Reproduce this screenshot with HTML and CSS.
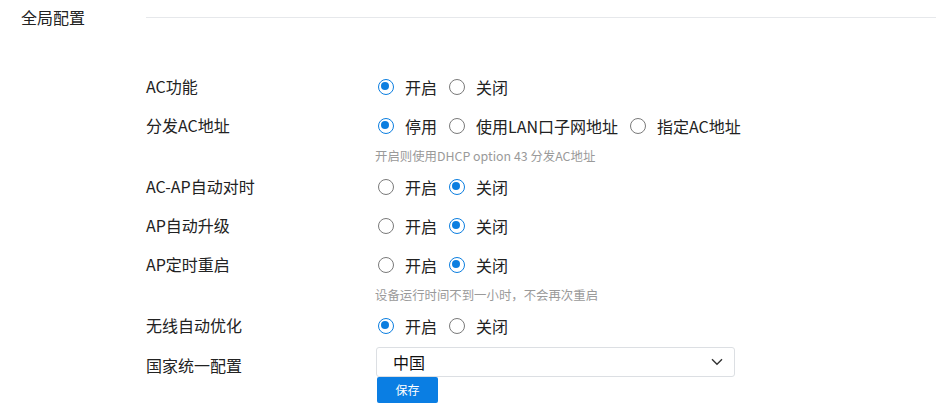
FILE: index.html
```html
<!DOCTYPE html>
<html lang="zh-CN">
<head>
<meta charset="utf-8">
<title>全局配置</title>
<link rel="stylesheet" href="styles.css">
</head>
<body>
<div class="page">
  <div class="section-head">
    <div class="section-title">全局配置</div>
    <div class="section-line"></div>
  </div>
  <div class="form">
    <div class="item">
      <div class="label">AC功能</div>
      <div class="control">
        <div class="radios">
          <span class="radio on"><i></i>开启</span>
          <span class="radio"><i></i>关闭</span>
        </div>
      </div>
    </div>
    <div class="item">
      <div class="label">分发AC地址</div>
      <div class="control">
        <div class="radios">
          <span class="radio on"><i></i>停用</span>
          <span class="radio"><i></i>使用LAN口子网地址</span>
          <span class="radio"><i></i>指定AC地址</span>
        </div>
        <div class="hint">开启则使用DHCP option 43 分发AC地址</div>
      </div>
    </div>
    <div class="item">
      <div class="label">AC-AP自动对时</div>
      <div class="control">
        <div class="radios">
          <span class="radio"><i></i>开启</span>
          <span class="radio on"><i></i>关闭</span>
        </div>
      </div>
    </div>
    <div class="item">
      <div class="label">AP自动升级</div>
      <div class="control">
        <div class="radios">
          <span class="radio"><i></i>开启</span>
          <span class="radio on"><i></i>关闭</span>
        </div>
      </div>
    </div>
    <div class="item">
      <div class="label">AP定时重启</div>
      <div class="control">
        <div class="radios">
          <span class="radio"><i></i>开启</span>
          <span class="radio on"><i></i>关闭</span>
        </div>
        <div class="hint">设备运行时间不到一小时，不会再次重启</div>
      </div>
    </div>
    <div class="item">
      <div class="label">无线自动优化</div>
      <div class="control">
        <div class="radios">
          <span class="radio on"><i></i>开启</span>
          <span class="radio"><i></i>关闭</span>
        </div>
      </div>
    </div>
    <div class="item item-select">
      <div class="label label-select">国家统一配置</div>
      <div class="control">
        <div class="select">
          <span class="select-value">中国</span>
          <svg class="chevron" width="12" height="8" viewBox="0 0 12 8"><path d="M1 1.2 L6 6.2 L11 1.2" fill="none" stroke="#333" stroke-width="1.4"/></svg>
        </div>
        <button class="btn-save">保存</button>
      </div>
    </div>
  </div>
</div>
</body>
</html>
```

FILE: styles.css
```css
html, body {
  margin: 0;
  padding: 0;
  background: #fff;
}
body {
  font-family: "Noto Sans CJK SC", "Noto Sans", sans-serif;
  color: #222;
  font-size: 16px;
}
.page {
  width: 936px;
  height: 420px;
  overflow: hidden;
}
.section-head {
  display: flex;
  align-items: center;
  height: 34px;
  padding-left: 21px;
}
.section-title {
  width: 125px;
  font-size: 16px;
  line-height: 20px;
  color: #222;
}
.section-line {
  flex: 1;
  height: 1px;
  background: #e6e8eb;
}
.form {
  padding-top: 33px;
}
.item {
  display: grid;
  grid-template-columns: 229px 1fr;
  padding-left: 146px;
}
.label {
  height: 39px;
  line-height: 39px;
  font-size: 16px;
  color: #222;
}
.control {
  display: flex;
  flex-direction: column;
}
.radios {
  display: flex;
  align-items: center;
  height: 39px;
}
.radio {
  display: inline-flex;
  align-items: center;
  font-size: 16px;
  color: #222;
  margin-right: 12px;
  margin-left: 3px;
}
.radio + .radio {
  margin-left: 0;
}
.wide {
  letter-spacing: 0.3px;
}
.radio i {
  box-sizing: border-box;
  width: 16px;
  height: 16px;
  border-radius: 50%;
  border: 1.6px solid #7a7a7a;
  margin-right: 11px;
  position: relative;
  display: inline-block;
}
.radio.on i {
  border: 1.6px solid #0b7ee0;
}
.radio.on i::after {
  content: "";
  position: absolute;
  left: 2.4px;
  top: 2.4px;
  width: 8px;
  height: 8px;
  border-radius: 50%;
  background: #0b7ee0;
}
.hint {
  height: 22px;
  line-height: 22px;
  font-size: 12.4px;
  color: #9a9a9a;
}
.label-select {
  height: auto;
  line-height: 20px;
  padding-top: 10px;
}
.select {
  box-sizing: border-box;
  margin-top: 1.5px;
  margin-left: 1px;
  width: 359px;
  height: 30px;
  border: 1px solid #dcdfe3;
  border-radius: 3px;
  display: flex;
  align-items: center;
  justify-content: space-between;
  padding: 0 11px 0 16px;
}
.select-value {
  font-size: 16px;
  color: #111;
}
.chevron {
  display: block;
}
.btn-save {
  margin-left: 2px;
  width: 61px;
  height: 26px;
  border: none;
  border-radius: 2px;
  background: #0a7ee3;
  color: #fff;
  font-family: "Noto Sans CJK SC", sans-serif;
  font-size: 12px;
  padding: 0;
}
```
